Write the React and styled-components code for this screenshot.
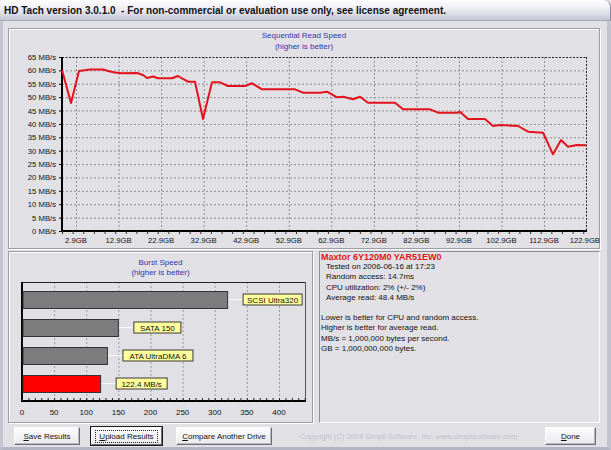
import React from "react";
import styled, { createGlobalStyle } from "styled-components";

const FACE = "#e1e0e5";

const Global = createGlobalStyle`
  html, body { margin: 0; padding: 0; background: ${FACE}; }
  * { box-sizing: border-box; }
`;

const Window = styled.div`
  width: 611px;
  height: 450px;
  display: flex;
  flex-direction: column;
  background: ${FACE};
  font-family: "Liberation Sans", Arial, sans-serif;
  overflow: hidden;
`;

const TitleBar = styled.div`
  height: 21px;
  flex: none;
  display: flex;
  align-items: center;
  padding: 1px 0 0 4px;
  border-radius: 0 7px 0 0;
  background: linear-gradient(#fefeff 0%, #f1f1f6 35%, #dcdce6 70%, #c3c3d3 100%);
  border-bottom: 1px solid #a9a9b9;
  border-right: 1px solid #8d8da3;
  font-weight: bold;
  font-size: 10px;
  color: #111;
  white-space: nowrap;
`;

const Frame = styled.div`
  flex: 1;
  display: flex;
  flex-direction: column;
  border-left: 3px solid #c4c4d0;
  border-right: 4px solid #c4c4d0;
  border-bottom: 3px solid #b4b4c4;
  padding: 7px 7px 0 5px;
`;

const Panel = styled.div`
  border: 1px solid #9d9da6;
  box-shadow: inset 1px 1px 0 #fdfdfd, 1px 1px 0 #fdfdfd;
  display: flex;
  flex-direction: column;
`;

const TopPanel = styled(Panel)`
  height: 221px;
  flex: none;
`;

const ChartTitle = styled.div`
  text-align: center;
  color: #3436a6;
  font-size: 8px;
  line-height: ${(p) => p.$lh}px;
  padding-top: ${(p) => p.$pt}px;
  flex: none;
`;

const BottomRow = styled.div`
  margin-top: 2px;
  height: 172px;
  flex: none;
  display: flex;
  gap: 6px;
`;

const BurstPanel = styled(Panel)`
  width: 305px;
  flex: none;
`;

const InfoPanel = styled.div`
  flex: 1;
  border-top: 1px solid #8f8f98;
  border-left: 1px solid #8f8f98;
  border-right: 1px solid #fdfdfd;
  border-bottom: 1px solid #fdfdfd;
  padding: 0 0 0 1px;
  font-size: 8px;
  line-height: 10.2px;
  color: #111;
`;

const InfoLine = styled.div`
  padding-left: ${(p) => (p.$indent ? 5 : 0)}px;
  height: 10.2px;
  white-space: nowrap;
`;

const DriveName = styled.div`
  color: #e01418;
  font-weight: bold;
  font-size: 9px;
  height: 10.2px;
  line-height: 10.2px;
`;

const ButtonRow = styled.div`
  margin-top: 4px;
  height: 18px;
  flex: none;
  display: flex;
  align-items: center;
  padding-left: 6px;
  padding-right: 4px;
`;

const Button = styled.button`
  height: 18px;
  width: ${(p) => p.$w}px;
  margin-right: ${(p) => p.$mr || 0}px;
  flex: none;
  padding: 0;
  font-family: "Liberation Sans", Arial, sans-serif;
  font-size: 8px;
  color: #111;
  background: linear-gradient(#fbfbfc, #ebebef);
  border: 1px solid;
  border-color: #ffffff #6f6f78 #6f6f78 #ffffff;
  box-shadow: ${(p) => (p.$default ? "0 0 0 1px #1a1a1a" : "inset -1px -1px 0 #b8b8c0")};
  display: flex;
  align-items: center;
  justify-content: center;
  u { text-decoration: underline; }
`;

const FocusRect = styled.span`
  border: 1px dotted #222;
  padding: 1px 3px;
  line-height: 9px;
`;

const Copyright = styled.div`
  flex: 1;
  text-align: center;
  font-size: 7.5px;
  color: #c2c2ca;
  white-space: nowrap;
`;

const ChartSvg = styled.svg`
  display: block;
  flex: none;
  overflow: visible;
  font-family: "Liberation Sans", Arial, sans-serif;
`;

/* ---------- sequential chart ---------- */
const PX0 = 62, PX1 = 586, PY0 = 57, PY1 = 231;
const vy = (v) => PY1 - v * ((PY1 - PY0) / 65);
const gx = (k) => 76 + k * 42.55;

const linePts = [
  [62,70],[71,103],[79,71],[90,69.5],[103,69.5],[110,71.5],[115,72.5],[122,73.3],[137,73],
  [143,75],[147,78],[153,76.5],[158,78.3],[172,78.3],[178,76],[182,78.3],[188,81.7],[195,81.7],
  [203,119],[212,82.3],[220,82.3],[228,86],[245,86],[252,83.3],[262,89.3],[295,89.3],[303,92.7],
  [320,92.7],[327,91.7],[337,97.3],[343,96.7],[353,99.3],[360,96.7],[368,102.7],[395,102.7],
  [403,109.3],[430,109.3],[438,112.7],[457,112.7],[460,111.7],[468,119],[485,119],[493,126],
  [500,125],[518,126],[528,131.7],[543,132.7],[553,154.3],[561,140],[568,146.7],[577,145],[586,145.3]
];

function SeqChart() {
  const ys = [];
  for (let v = 0; v <= 65; v += 5) ys.push(v);
  const xs = [];
  for (let k = 0; k <= 12; k++) xs.push(k);
  const minor = [];
  for (let x = PX0; x <= PX1; x += 42.55 / 4) minor.push(x);
  return (
    <ChartSvg width="590" height="196" viewBox="0 0 590 196">
      <g transform="translate(-9,-52)">
        {ys.filter((v) => v > 0 && v < 65).map((v) => (
          <line key={"h" + v} x1={PX0} x2={PX1} y1={vy(v) + 0.5} y2={vy(v) + 0.5}
            stroke="#8e8e96" strokeWidth="1" strokeDasharray="2 2" />
        ))}
        {xs.filter((k) => k < 12).map((k) => (
          <line key={"v" + k} x1={gx(k) + 0.5} x2={gx(k) + 0.5} y1={PY0} y2={PY1}
            stroke="#8e8e96" strokeWidth="1" strokeDasharray="2 2" />
        ))}
        <line x1={PX0} x2={PX1} y1={PY0 + 0.5} y2={PY0 + 0.5} stroke="#222" strokeDasharray="2 1.5" />
        <line x1={PX1 + 0.5} x2={PX1 + 0.5} y1={PY0} y2={PY1} stroke="#222" strokeDasharray="2 1.5" />
        <line x1={PX0} x2={PX0} y1={PY0} y2={PY1 + 1} stroke="#000" strokeWidth="2" />
        <line x1={PX0} x2={PX1 + 1} y1={PY1} y2={PY1} stroke="#000" strokeWidth="2" />
        {minor.map((x, i) => (
          <line key={"m" + i} x1={x + 0.5} x2={x + 0.5} y1={PY1} y2={PY1 + 3} stroke="#333" strokeWidth="1" />
        ))}
        {ys.map((v) => (
          <g key={"yl" + v}>
            <line x1={PX0 - 3} x2={PX0} y1={vy(v) + 0.5} y2={vy(v) + 0.5} stroke="#000" />
            <text x={56} y={vy(v) + 3} textAnchor="end" fontSize="7.7" fill="#111">{v} MB/s</text>
          </g>
        ))}
        {xs.map((k) => (
          <text key={"xl" + k} x={k === 12 ? 600 : gx(k)} y={243} textAnchor={k === 12 ? "end" : "middle"}
            fontSize="7.7" fill="#111">
            {(2.9 + k * 10).toFixed(1)}GB
          </text>
        ))}
        <polyline points={linePts.map((p) => p.join(",")).join(" ")} fill="none"
          stroke="#e4121c" strokeWidth="2" strokeLinejoin="round" />
      </g>
    </ChartSvg>
  );
}

/* ---------- burst chart ---------- */
const BX0 = 22, BX1 = 305, BY0 = 282, BY1 = 401;
const bscale = (v) => BX0 + v * 0.6425;
const bars = [
  { y: 291, v: 320, label: "SCSI Ultra320", w: 59, color: "#7c7c7c" },
  { y: 319, v: 150, label: "SATA 150", w: 47, color: "#7c7c7c" },
  { y: 347, v: 133, label: "ATA UltraDMA 6", w: 70, color: "#7c7c7c" },
  { y: 375, v: 122.4, label: "122.4 MB/s", w: 51, color: "#ff0000" },
];

function BurstChart() {
  const grid = [50, 100, 150, 200, 250, 300, 350, 400];
  const ticks = [];
  for (let v = 0; v <= 440; v += 10) ticks.push(v);
  return (
    <ChartSvg width="303" height="144" viewBox="0 0 303 144">
      <g transform="translate(-9,-278)">
        {grid.map((v) => (
          <line key={v} x1={bscale(v) + 0.5} x2={bscale(v) + 0.5} y1={BY0} y2={BY1}
            stroke="#9a9aa2" strokeDasharray="2 2" />
        ))}
        <line x1={BX0} x2={BX1} y1={BY0 + 0.5} y2={BY0 + 0.5} stroke="#222" />
        <line x1={BX1 + 0.5} x2={BX1 + 0.5} y1={BY0} y2={BY1} stroke="#555" />
        <line x1={BX0} x2={BX0} y1={BY0} y2={BY1 + 1} stroke="#000" strokeWidth="2" />
        <line x1={BX0} x2={BX1 + 1} y1={BY1} y2={BY1} stroke="#000" strokeWidth="2" />
        {ticks.map((v) => (
          <line key={"t" + v} x1={bscale(v) + 0.5} x2={bscale(v) + 0.5} y1={BY1 - 3} y2={BY1}
            stroke="#222" />
        ))}
        {bars.map((b) => {
          const end = bscale(b.v);
          const mid = b.y + 8.5;
          return (
            <g key={b.label}>
              <line x1={end} x2={end + 15} y1={mid} y2={mid} stroke="#f8f8f8" />
              <rect x={BX0 + 1} y={b.y + 0.5} width={end - BX0 - 1} height={17} fill={b.color}
                stroke="#333" strokeWidth="1" />
              <rect x={end + 15.5} y={mid - 5.5} width={b.w} height={11} fill="#ffff9c"
                stroke="#3a3a3a" strokeWidth="1" />
              <text x={end + 15.5 + b.w / 2} y={mid + 3} textAnchor="middle" fontSize="8" fill="#111">
                {b.label}
              </text>
            </g>
          );
        })}
        {[0, ...grid].map((v) => (
          <text key={"l" + v} x={bscale(v)} y={415} textAnchor="middle" fontSize="8" fill="#111">{v}</text>
        ))}
      </g>
    </ChartSvg>
  );
}

export default function App() {
  return (
    <>
      <Global />
      <Window>
        <TitleBar>HD Tach version 3.0.1.0&nbsp; - For non-commercial or evaluation use only, see license agreement.</TitleBar>
        <Frame>
          <TopPanel>
            <ChartTitle $lh={11} $pt={1}>
              Sequential Read Speed
              <br />
              (higher is better)
            </ChartTitle>
            <SeqChart />
          </TopPanel>
          <BottomRow>
            <BurstPanel>
              <ChartTitle $lh={10} $pt={6}>
                Burst Speed
                <br />
                (higher is better)
              </ChartTitle>
              <BurstChart />
            </BurstPanel>
            <InfoPanel>
              <DriveName>Maxtor 6Y120M0 YAR51EW0</DriveName>
              <InfoLine $indent>Tested on 2006-06-16 at 17:23</InfoLine>
              <InfoLine $indent>Random access: 14.7ms</InfoLine>
              <InfoLine $indent>CPU utilization: 2% (+/- 2%)</InfoLine>
              <InfoLine $indent>Average read: 48.4 MB/s</InfoLine>
              <InfoLine />
              <InfoLine>Lower is better for CPU and random access.</InfoLine>
              <InfoLine>Higher is better for average read.</InfoLine>
              <InfoLine>MB/s = 1,000,000 bytes per second.</InfoLine>
              <InfoLine>GB = 1,000,000,000 bytes.</InfoLine>
            </InfoPanel>
          </BottomRow>
          <ButtonRow>
            <Button $w={66} $mr={11}><span><u>S</u>ave Results</span></Button>
            <Button $w={71} $mr={14} $default><FocusRect><u>U</u>pload Results</FocusRect></Button>
            <Button $w={96}><span><u>C</u>ompare Another Drive</span></Button>
            <Copyright>Copyright (C) 2004 Simpli Software, Inc. www.simplisoftware.com</Copyright>
            <Button $w={51}><span><u>D</u>one</span></Button>
          </ButtonRow>
        </Frame>
      </Window>
    </>
  );
}
